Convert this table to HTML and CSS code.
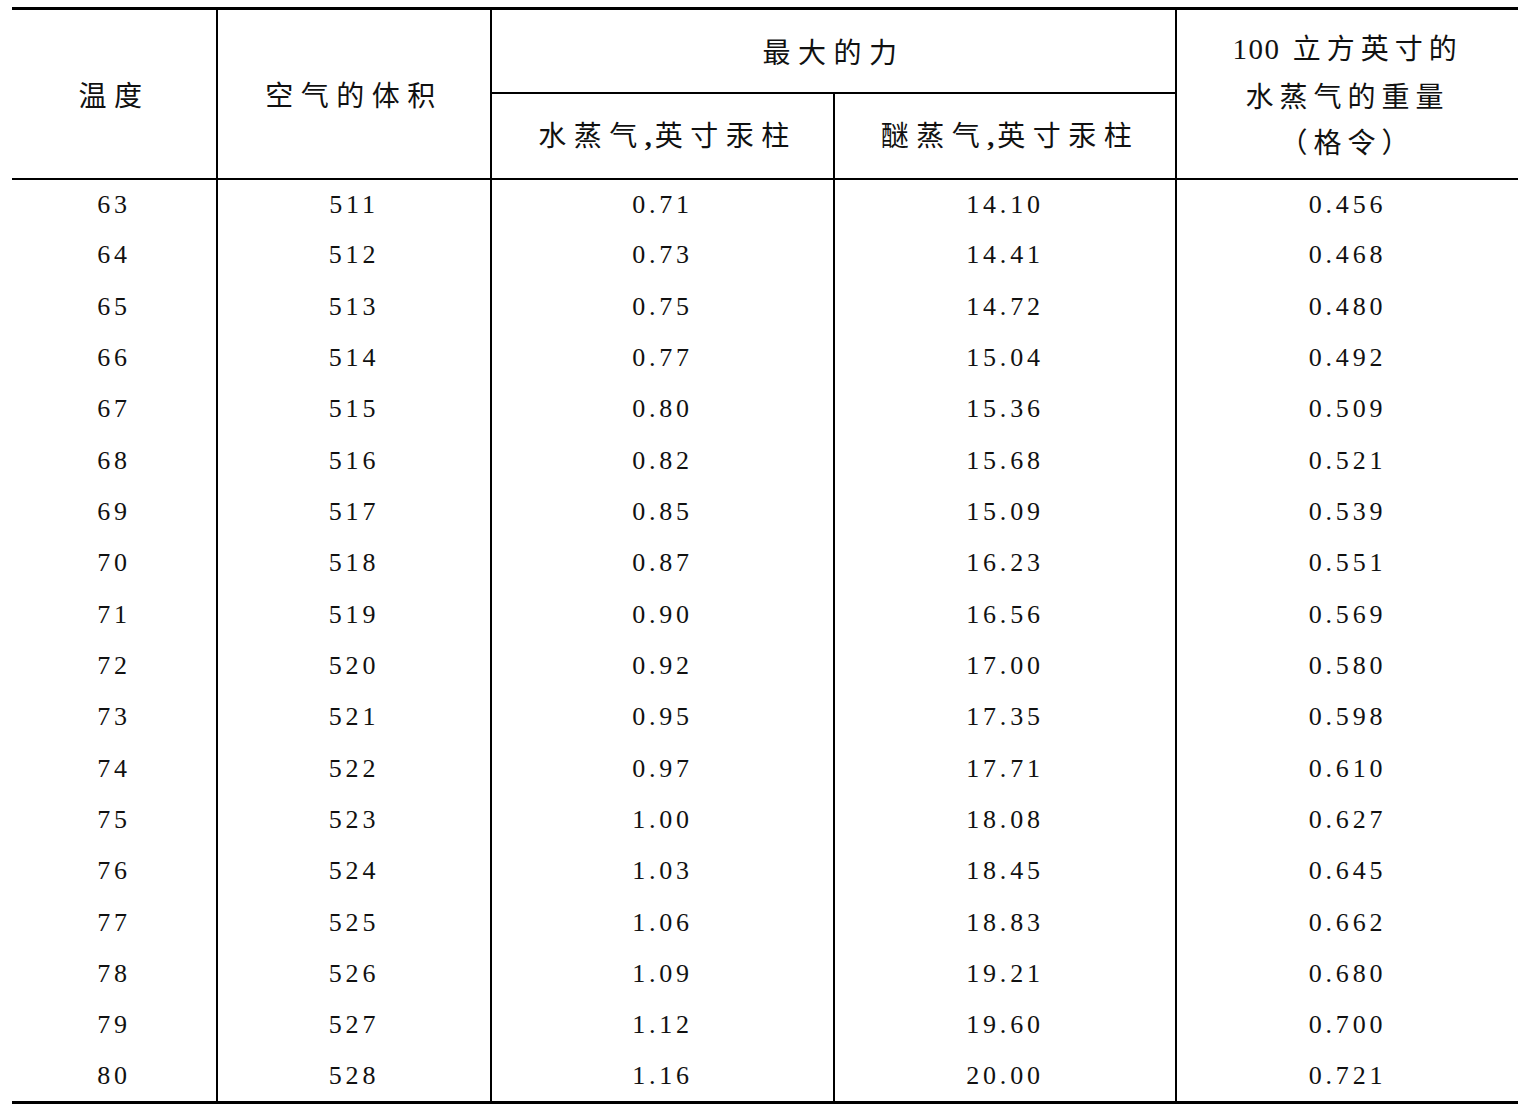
FILE: index.html
```html
<!DOCTYPE html>
<html lang="zh">
<head>
<meta charset="utf-8">
<title>水蒸气表</title>
<link rel="stylesheet" href="styles.css">
</head>
<body>
<table class="data-table">
  <colgroup>
    <col class="c1"><col class="c2"><col class="c3"><col class="c4"><col class="c5">
  </colgroup>
  <thead>
    <tr class="hrow1">
      <th rowspan="2" class="hcell">温度</th>
      <th rowspan="2" class="hcell">空气的体积</th>
      <th colspan="2" class="hcell group">最大的力</th>
      <th rowspan="2" class="hcell multi"><span class="num">100</span> 立方英寸的<br>水蒸气的重量<br>（格令）</th>
    </tr>
    <tr class="hrow2">
      <th class="hcell sub">水蒸气<span class="comma">,</span>英寸汞柱</th>
      <th class="hcell sub">醚蒸气<span class="comma">,</span>英寸汞柱</th>
    </tr>
  </thead>
  <tbody>
    <tr><td>63</td><td>511</td><td>0.71</td><td>14.10</td><td>0.456</td></tr>
    <tr><td>64</td><td>512</td><td>0.73</td><td>14.41</td><td>0.468</td></tr>
    <tr><td>65</td><td>513</td><td>0.75</td><td>14.72</td><td>0.480</td></tr>
    <tr><td>66</td><td>514</td><td>0.77</td><td>15.04</td><td>0.492</td></tr>
    <tr><td>67</td><td>515</td><td>0.80</td><td>15.36</td><td>0.509</td></tr>
    <tr><td>68</td><td>516</td><td>0.82</td><td>15.68</td><td>0.521</td></tr>
    <tr><td>69</td><td>517</td><td>0.85</td><td>15.09</td><td>0.539</td></tr>
    <tr><td>70</td><td>518</td><td>0.87</td><td>16.23</td><td>0.551</td></tr>
    <tr><td>71</td><td>519</td><td>0.90</td><td>16.56</td><td>0.569</td></tr>
    <tr><td>72</td><td>520</td><td>0.92</td><td>17.00</td><td>0.580</td></tr>
    <tr><td>73</td><td>521</td><td>0.95</td><td>17.35</td><td>0.598</td></tr>
    <tr><td>74</td><td>522</td><td>0.97</td><td>17.71</td><td>0.610</td></tr>
    <tr><td>75</td><td>523</td><td>1.00</td><td>18.08</td><td>0.627</td></tr>
    <tr><td>76</td><td>524</td><td>1.03</td><td>18.45</td><td>0.645</td></tr>
    <tr><td>77</td><td>525</td><td>1.06</td><td>18.83</td><td>0.662</td></tr>
    <tr><td>78</td><td>526</td><td>1.09</td><td>19.21</td><td>0.680</td></tr>
    <tr><td>79</td><td>527</td><td>1.12</td><td>19.60</td><td>0.700</td></tr>
    <tr><td>80</td><td>528</td><td>1.16</td><td>20.00</td><td>0.721</td></tr>
  </tbody>
</table>
</body>
</html>
```
FILE: styles.css
```css
html, body {
  margin: 0;
  padding: 0;
  background: #ffffff;
}

body {
  padding: 7px 0 0 12px;
  color: #111;
  font-family: "Liberation Serif", "Noto Sans CJK SC", serif;
}

.data-table {
  border-collapse: collapse;
  width: 1506px;
  table-layout: fixed;
  border-top: 3px solid #000;
  border-bottom: 3px solid #000;
}

.c1 { width: 205px; }
.c2 { width: 274px; }
.c3 { width: 343px; }
.c4 { width: 342px; }
.c5 { width: 342px; }

.data-table th,
.data-table td {
  padding: 0;
  text-align: center;
  vertical-align: middle;
  border-left: 2px solid #000;
}

.data-table th:first-child,
.data-table td:first-child {
  border-left: none;
}

.hcell {
  font-family: "Noto Sans CJK SC", sans-serif;
  font-weight: 400;
  font-size: 28px;
  letter-spacing: 7.5px;
  padding-left: 14px;
  line-height: 46px;
}

.hcell.sub {
  padding-left: 10px;
}

.hrow1 { height: 84px; }
.hrow2 { height: 86px; }

.hrow2 th {
  border-bottom: 2px solid #000;
}

.hrow1 th[rowspan] {
  border-bottom: 2px solid #000;
}

.group {
  border-bottom: 2px solid #000;
}

.hrow2 .sub:first-child {
  border-left: 2px solid #000;
}

.multi {
  letter-spacing: 6px;
  padding-left: 6px;
  padding-top: 2px;
}

.num {
  font-family: "Liberation Serif", serif;
  font-size: 29px;
  letter-spacing: 1.5px;
}

.comma {
  font-family: "Liberation Serif", serif;
  font-weight: 700;
  letter-spacing: 3px;
}

tbody tr {
  height: 51px;
}

tbody tr:nth-child(3n) {
  height: 52px;
}

tbody td {
  font-family: "Liberation Serif", serif;
  font-size: 26px;
  letter-spacing: 3.8px;
  padding-left: 14px;
  line-height: 30px;
}
```
